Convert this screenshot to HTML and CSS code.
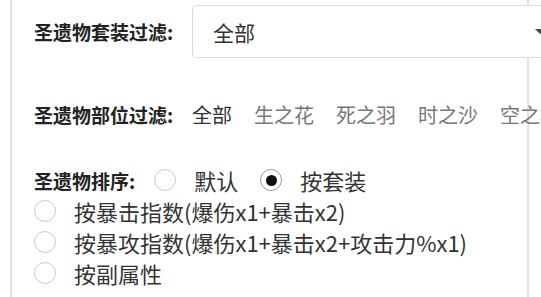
FILE: index.html
```html
<!DOCTYPE html>
<html lang="zh-CN">
<head>
<meta charset="utf-8">
<link rel="stylesheet" href="styles.css">
</head>
<body>
<div class="panel">
  <div class="row row-set">
    <span class="label">圣遗物套装过滤:</span>
    <div class="select"><span class="select-text">全部</span><span class="arrow"></span></div>
  </div>
  <div class="row row-pos">
    <span class="label">圣遗物部位过滤:</span>
    <div class="tabs">
      <span class="tab active">全部</span>
      <span class="tab">生之花</span>
      <span class="tab">死之羽</span>
      <span class="tab">时之沙</span>
      <span class="tab">空之杯</span>
    </div>
  </div>
  <div class="row row-sort">
    <span class="label">圣遗物排序:</span>
    <label class="radio"><span class="circle"></span><span class="radio-text">默认</span></label>
    <label class="radio checked"><span class="circle"></span><span class="radio-text">按套装</span></label>
    <label class="radio"><span class="circle"></span><span class="radio-text">按暴击指数(爆伤x1+暴击x2)</span></label>
    <label class="radio"><span class="circle"></span><span class="radio-text">按暴攻指数(爆伤x1+暴击x2+攻击力%x1)</span></label>
    <label class="radio"><span class="circle"></span><span class="radio-text">按副属性</span></label>
  </div>
</div>
</body>
</html>
```

FILE: styles.css
```css
html, body {
  margin: 0;
  padding: 0;
  overflow: hidden;
  background: #fff;
  width: 541px;
  height: 297px;
}
body {
  font-family: "Noto Sans CJK SC", "Noto Sans", sans-serif;
  color: #333;
}
.panel {
  margin-left: 10px;
  width: 519px;
  height: 297px;
  border-left: 2px solid #e2e2e2;
  border-right: 2px solid #e2e2e2;
  padding: 5px 0 0 22px;
  box-sizing: border-box;
  position: relative;
}
.row {
  display: flex;
  align-items: center;
}
.label {
  font-size: 19px;
  font-weight: bold;
  color: #222;
  white-space: nowrap;
  width: 158px;
  flex: none;
}
.row-sort .label {
  width: auto;
  margin-right: 19px;
}
.select {
  flex: none;
  position: relative;
  z-index: 1;
  width: 370px;
  height: 53px;
  box-sizing: border-box;
  border: 1px solid #dcdcdc;
  border-radius: 4px;
  background: #fff;
  display: flex;
  align-items: center;
  padding-left: 20px;
  padding-right: 16px;
}
.select-text {
  font-size: 21px;
  color: #333;
  flex: 1;
}
.arrow {
  width: 0;
  height: 0;
  border-left: 5px solid transparent;
  border-right: 5px solid transparent;
  border-top: 5px solid #444;
}
.row-pos {
  margin-top: 41px;
  height: 30px;
}
.tabs {
  display: flex;
  gap: 22px;
  white-space: nowrap;
  flex: none;
}
.tab {
  font-size: 20px;
  color: #777;
}
.tab.active {
  color: #333;
}
.row-sort {
  margin-top: 36px;
  flex-wrap: wrap;
  row-gap: 1px;
  column-gap: 0;
}
.radio {
  display: flex;
  align-items: center;
  height: 30px;
  margin-right: 22px;
  white-space: nowrap;
}
.circle {
  width: 22px;
  height: 22px;
  box-sizing: border-box;
  border: 1.5px solid #cacaca;
  border-radius: 50%;
  margin-right: 18px;
  display: flex;
  align-items: center;
  justify-content: center;
  flex: none;
}
.radio.checked .circle {
  border-color: #9a9a9a;
}
.radio.checked .circle::after {
  content: "";
  width: 11px;
  height: 11px;
  border-radius: 50%;
  background: #111;
}
.radio-text {
  font-size: 22px;
  line-height: 30px;
  color: #333;
}
```
